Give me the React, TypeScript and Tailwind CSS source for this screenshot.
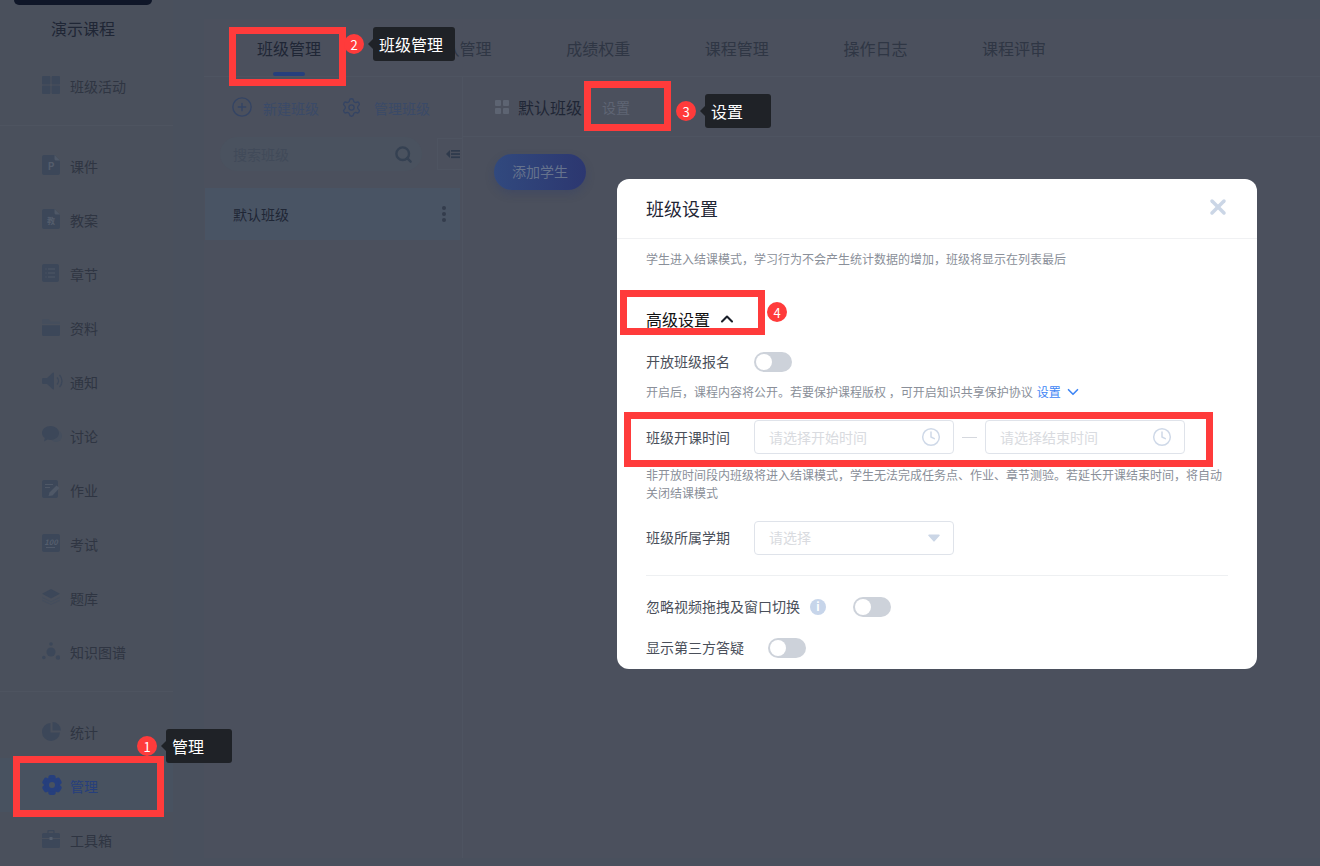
import { Search, CirclePlus, Settings, ChevronUp, ChevronDown, X, Clock } from 'lucide-react';
import type { ReactNode } from 'react';

const ICON = '#3c4759';

function DocIcon({ label }: { label: string }) {
  return (
    <svg width="18" height="20" viewBox="0 0 18 20">
      <path d="M2 0h10.500L18 5.500V18a2 2 0 0 1-2 2H2a2 2 0 0 1-2-2V2a2 2 0 0 1 2-2z" fill={ICON} />
      <path d="M12.500 0 18 5.500h-4a1.500 1.500 0 0 1-1.500-1.500z" fill="#4f5867" />
      <text x="9" y="15" textAnchor="middle" fontSize={label === 'P' ? 10 : 8} fontWeight="700" fill="#545d6c">{label}</text>
    </svg>
  );
}

const navIcons: Record<string, ReactNode> = {
  grid: (
    <svg width="18" height="18" viewBox="0 0 18 18" fill={ICON}>
      <rect width="8.400" height="8.400" rx="1" />
      <rect x="9.600" width="8.400" height="8.400" rx="1" />
      <rect y="9.600" width="8.400" height="8.400" rx="1" />
      <rect x="9.600" y="9.600" width="8.400" height="8.400" rx="1" />
    </svg>
  ),
  ppt: <DocIcon label="P" />,
  plan: <DocIcon label="教" />,
  list: (
    <svg width="18" height="18" viewBox="0 0 18 18">
      <rect width="17" height="18" rx="2" fill={ICON} />
      <path d="M6 5h7M6 9h7M6 13h7M3.500 5h1M3.500 9h1M3.500 13h1" stroke="#4f5867" strokeWidth="1.200" />
    </svg>
  ),
  folder: (
    <svg width="18" height="17" viewBox="0 0 18 17">
      <path d="M1.500 0h5l2 2.500h8A1.500 1.500 0 0 1 18 4v1H0V1.500A1.500 1.500 0 0 1 1.500 0z" fill="#454e5d" />
      <path d="M0 6.200h18v9.300a1.500 1.500 0 0 1-1.500 1.500h-15A1.500 1.500 0 0 1 0 15.500z" fill={ICON} />
    </svg>
  ),
  sound: (
    <svg width="22" height="18" viewBox="0 0 22 18" fill="none">
      <path d="M0 6.500 1.500 6H5l6-5.500a.8.800 0 0 1 1 .5v16a.8.800 0 0 1-1 .5L5 12H1.500L0 11.500z" fill={ICON} />
      <path d="M15 5.500a5 5 0 0 1 0 7M17.500 3a8.500 8.500 0 0 1 0 12" stroke={ICON} strokeWidth="1.400" />
    </svg>
  ),
  chat: (
    <svg width="20" height="18" viewBox="0 0 20 18">
      <ellipse cx="14" cy="10" rx="6" ry="6" fill="#454e5d" />
      <path d="M8.500 0C13 0 17 3 17 7s-4 7-8.500 7c-1 0-2-.1-3-.4L2 15.500l.8-3.500C1 10.800 0 9 0 7c0-4 4-7 8.500-7z" fill={ICON} />
    </svg>
  ),
  edit: (
    <svg width="18" height="18" viewBox="0 0 18 18">
      <rect width="16" height="18" rx="2" fill={ICON} />
      <path d="M3 4.500h8M3 7.500h5" stroke="#4f5867" strokeWidth="1.200" />
      <path d="M6.500 16l1-3.500L14.500 5.500l3 2.500-7 7.500z" fill="#4f5867" />
    </svg>
  ),
  exam: (
    <svg width="18" height="18" viewBox="0 0 18 18">
      <rect width="18" height="18" rx="2" fill={ICON} />
      <text x="9" y="11" textAnchor="middle" fontSize="7.500" fontStyle="italic" fontWeight="700" fill="#555e6d">100</text>
      <path d="M4 13.500h9" stroke="#555e6d" strokeWidth=".8" />
    </svg>
  ),
  stack: (
    <svg width="18" height="16" viewBox="0 0 18 16">
      <path d="M9 0l9 4.800-9 4.700L0 4.800z" fill={ICON} />
      <path d="M0 7.500l9 4.700 9-4.700v1.400l-9 4.600-9-4.600z" fill="#454e5d" />
      <path d="M0 10.500l9 4.200 9-4.200V12l-9 4-9-4z" fill="#454e5d" />
    </svg>
  ),
  graph: (
    <svg width="18" height="18" viewBox="0 0 18 18" fill={ICON}>
      <circle cx="9" cy="10" r="4.500" />
      <circle cx="9" cy="2" r="1.800" />
      <circle cx="1.800" cy="15.500" r="1.800" />
      <circle cx="16" cy="15.500" r="2.200" />
    </svg>
  ),
  pie: (
    <svg width="19" height="19" viewBox="0 0 19 19">
      <path d="M8.500 1v9.500H18A9 9 0 1 1 8.500 1z" fill={ICON} />
      <path d="M10.500 0A8.500 8.500 0 0 1 19 8.500h-8.500z" fill={ICON} />
    </svg>
  ),
  gear: (
    <svg width="20" height="20" viewBox="0 0 20 20" fill="#263f7d">
      <rect x="6.300" y="0" width="7.400" height="20" rx="2.500" />
      <rect x="6.300" y="0" width="7.400" height="20" rx="2.500" transform="rotate(60 10 10)" />
      <rect x="6.300" y="0" width="7.400" height="20" rx="2.500" transform="rotate(120 10 10)" />
      <circle cx="10" cy="10" r="7" />
      <circle cx="10" cy="10" r="3" fill="#485260" />
    </svg>
  ),
  box: (
    <svg width="18" height="18" viewBox="0 0 18 18">
      <path d="M6 3V1.500A1 1 0 0 1 7 .500h4a1 1 0 0 1 1 1V3" fill="none" stroke={ICON} strokeWidth="1.300" />
      <path d="M1.500 3h15A1.500 1.500 0 0 1 18 4.500V8H0V4.500A1.500 1.500 0 0 1 1.500 3z" fill={ICON} />
      <path d="M0 9h18v7.500a1.500 1.500 0 0 1-1.500 1.500h-15A1.500 1.500 0 0 1 0 16.500z" fill={ICON} />
      <rect x="7.500" y="7" width="3" height="3" fill="#555e6d" />
    </svg>
  ),
};

function NavItem({ icon, label, active }: { icon: string; label: string; active?: boolean }) {
  return (
    <div className={`flex h-[54px] items-center ${active ? 'bg-[#485260]' : ''}`}>
      <div className="ml-[42px] flex w-[28px] items-center">{navIcons[icon]}</div>
      <span className={`mt-[2px] text-sm leading-5 ${active ? 'text-[#263f7d]' : 'text-[#2f3542]'}`}>{label}</span>
    </div>
  );
}

function Sidebar() {
  const middle = [
    ['ppt', '课件'], ['plan', '教案'], ['list', '章节'], ['folder', '资料'], ['sound', '通知'],
    ['chat', '讨论'], ['edit', '作业'], ['exam', '考试'], ['stack', '题库'], ['graph', '知识图谱'],
  ];
  return (
    <aside className="flex h-full w-[173px] shrink-0 flex-col bg-[#4a505c]">
      <div className="mx-[14px] h-[7px] w-[138px] rounded-b-md bg-[#0f1628]" />
      <div className="mt-[13px] pr-[7px] text-center text-base leading-5 text-[#1f2635]">演示课程</div>
      <div className="mt-[20px] h-[54px]">
        <NavItem icon="grid" label="班级活动" />
      </div>
      <div className="mt-[13px] border-t border-[#4e5460]" />
      <div className="pt-[12px]">
        {middle.map(([icon, label]) => (
          <NavItem key={label} icon={icon} label={label} />
        ))}
      </div>
      <div className="mt-[13px] border-t border-[#4e5460]" />
      <div className="pt-[12px]">
        <NavItem icon="pie" label="统计" />
        <NavItem icon="gear" label="管理" active />
        <NavItem icon="box" label="工具箱" />
      </div>
    </aside>
  );
}

function Tabs() {
  const tabs = ['班级管理', '教师团队管理', '成绩权重', '课程管理', '操作日志', '课程评审'];
  return (
    <div className="flex h-[58px] shrink-0 items-center gap-[74.600px] border-b border-[#4e5461] pl-[53px]">
      {tabs.map((t, i) => (
        <div key={t} className={`relative flex h-full items-center text-base ${i === 0 ? 'text-[#1f2635]' : 'text-[#2f3644]'}`}>
          {t}
          {i === 0 && <div className="absolute bottom-[0px] left-1/2 h-[4px] w-[32px] -translate-x-1/2 rounded-full bg-[#263f7d]" />}
        </div>
      ))}
    </div>
  );
}

function ClassList() {
  return (
    <div className="w-[259px] shrink-0 border-r border-[#4e5461]">
      <div className="flex h-[60px] items-center pl-[27px] text-sm">
        <CirclePlus size={22} strokeWidth={1.500} className="text-[#344464]" />
        <span className="mt-[2px] ml-[10px] text-[#3a4a68]">新建班级</span>
        <Settings size={21} strokeWidth={1.500} className="ml-[22px] text-[#344464]" />
        <span className="mt-[2px] ml-[12px] text-[#3a4a68]">管理班级</span>
      </div>
      <div className="flex items-center">
        <div className="ml-[16px] flex h-[34px] w-[204px] items-center rounded-full bg-[#4a525f] pl-[13px] text-sm text-[#414a59]">
          搜索班级
          <Search size={19} strokeWidth={3} className="ml-[105px] text-[#354152]" />
        </div>
        <div className="ml-[15px] flex h-[32px] w-[25px] items-center justify-end border border-r-0 border-[#4e5461] pr-[2px]">
          <svg width="14" height="10" viewBox="0 0 14 10" fill="#2f3a4c">
            <path d="M0 5l4-4v8z" />
            <rect x="5" y="1" width="9" height="1.700" />
            <rect x="5" y="4.200" width="9" height="1.700" />
            <rect x="5" y="7.400" width="9" height="1.700" />
          </svg>
        </div>
      </div>
      <div className="mt-[17px] mr-[2px] ml-[1px] flex h-[52px] items-center justify-between bg-[#495464] pr-[13px] pl-[28px] text-sm text-[#1f2635]">
        默认班级
        <svg width="6" height="16" viewBox="0 0 6 16" fill="#333c4c">
          <circle cx="3" cy="2" r="2" />
          <circle cx="3" cy="8" r="2" />
          <circle cx="3" cy="14" r="2" />
        </svg>
      </div>
    </div>
  );
}

function ClassDetail() {
  return (
    <div className="flex-1">
      <div className="flex h-[60px] items-center border-b border-[#4e5461] pl-[32px]">
        <svg width="14" height="14" viewBox="0 0 14 14" fill="#5d6472">
          <rect width="6" height="6" rx="1" />
          <rect x="8" width="6" height="6" rx="1" />
          <rect y="8" width="6" height="6" rx="1" />
          <rect x="8" y="8" width="6" height="6" rx="1" />
        </svg>
        <span className="ml-[9px] text-base text-[#1f2635]">默认班级</span>
        <span className="ml-[20px] text-sm text-[#5f6574]">设置</span>
      </div>
      <button className="mt-[17px] ml-[31px] h-[36px] w-[92px] rounded-full bg-gradient-to-r from-[#31497e] to-[#2c3770] pb-[2px] text-sm text-[#66738d] shadow-[0_4px_8px_rgba(40,55,110,0.25)]">
        添加学生
      </button>
    </div>
  );
}

function Toggle() {
  return (
    <div className="flex h-[20px] w-[38px] shrink-0 items-center rounded-full bg-[#cdd2da] px-[2px]">
      <div className="h-[16px] w-[16px] rounded-full bg-white" />
    </div>
  );
}

function Field({ placeholder, icon, up }: { placeholder: string; icon: ReactNode; up?: boolean }) {
  return (
    <div className="flex h-[34px] w-[200px] items-center justify-between rounded border border-[#dfe3ea] pr-[13px] pl-[14px] text-sm text-[#d9dbe0]">
      <span className={up ? '-mt-[2px]' : ''}>{placeholder}</span>
      {icon}
    </div>
  );
}

function SettingsModal() {
  const clock = <Clock size={20} strokeWidth={1.800} className="-mr-[1px] text-[#cfd9e8]" />;
  return (
    <div className="absolute top-[179px] left-[617px] h-[490px] w-[640px] overflow-hidden rounded-xl bg-white">
      <div className="flex h-[60px] items-center justify-between border-b border-[#f0f1f3] pr-[27px] pl-[29px]">
        <span className="text-[18px] text-[#1f2635]">班级设置</span>
        <X size={24} strokeWidth={3.500} className="-mt-[4px] text-[#cbd6e6]" />
      </div>
      <div className="px-[29px]">
        <p className="mt-[11px] text-xs leading-[18px] text-[#8a8f99]">学生进入结课模式，学习行为不会产生统计数据的增加，班级将显示在列表最后</p>
        <div className="mt-[41px] flex h-[20px] items-center text-base text-[#111]">
          高级设置
          <ChevronUp size={20} strokeWidth={2.500} className="ml-[7px] text-[#1a1f29]" />
        </div>
        <div className="mt-[23px] flex h-[20px] items-center text-sm text-[#4a4f5a]">
          <span className="-mt-[2px] w-[108px]">开放班级报名</span>
          <Toggle />
        </div>
        <p className="mt-[11px] flex h-[18px] items-center text-xs text-[#8a8f99]">
          开启后，课程内容将公开。若要保护课程版权 ，可开启知识共享保护协议
          <span className="ml-[4px] text-[#3f86f5]">设置</span>
          <ChevronDown size={18} strokeWidth={2.200} className="ml-[3px] text-[#3f86f5]" />
        </p>
        <div className="mt-[19px] flex items-center text-sm text-[#4a4f5a]">
          <span className="w-[108px]">班级开课时间</span>
          <Field placeholder="请选择开始时间" icon={clock} />
          <div className="mx-[8px] h-px w-[15px] bg-[#d5d8de]" />
          <Field placeholder="请选择结束时间" icon={clock} />
        </div>
        <p className="mt-[12px] text-xs leading-[18px] text-[#8a8f99]">非开放时间段内班级将进入结课模式，学生无法完成任务点、作业、章节测验。若延长开课结束时间，将自动关闭结课模式</p>
        <div className="mt-[19px] flex items-center text-sm text-[#4a4f5a]">
          <span className="-mt-[2px] w-[108px]">班级所属学期</span>
          <Field
            up
            placeholder="请选择"
            icon={
              <svg width="12" height="8" viewBox="0 0 12 8" fill="#cbd6e6">
                <path d="M1 .500h10a.8.800 0 0 1 .6 1.300L6.600 7.300a.8.800 0 0 1-1.200 0L.4 1.800A.8.800 0 0 1 1 .500z" />
              </svg>
            }
          />
        </div>
        <div className="mt-[20px] border-t border-[#eef0f2]" />
        <div className="mt-[21px] flex h-[20px] items-center text-sm text-[#4a4f5a]">
          <span className="-mt-[2px]">忽略视频拖拽及窗口切换</span>
          <div className="ml-[10px] flex h-[16px] w-[16px] items-center justify-center rounded-full bg-[#c7d5ea] text-[11px] font-bold text-white">i</div>
          <div className="ml-[26px] pl-[1px]"><Toggle /></div>
        </div>
        <div className="mt-[21px] flex h-[20px] items-center text-sm text-[#4a4f5a]">
          <span className="-mt-[2px]">显示第三方答疑</span>
          <div className="ml-[24px]"><Toggle /></div>
        </div>
      </div>
    </div>
  );
}

// red marker frames, numbered badges and tooltips drawn over the shot
function Frame({ className }: { className: string }) {
  return <div className={`absolute border-[7px] border-[#ff3b3b] ${className}`} />;
}

function Badge({ n, className }: { n: number; className: string }) {
  return (
    <div className={`absolute flex h-[20px] w-[20px] items-center justify-center rounded-full bg-[#ff3b3b] text-[13px] leading-none text-white ${className}`}>
      {n}
    </div>
  );
}

function Tip({ text, className }: { text: string; className: string }) {
  return (
    <div className={`absolute flex h-[34px] items-center rounded-[3px] bg-[#1f2227] pl-[6px] text-base text-white ${className}`}>
      <div className="absolute top-1/2 -left-[5px] h-0 w-0 -translate-y-1/2 border-y-[5px] border-r-[5px] border-y-transparent border-r-[#1f2227]" />
      {text}
    </div>
  );
}

export default function App() {
  return (
    <div className="relative flex h-[866px] w-[1320px] overflow-hidden bg-[#49505d] font-['Noto_Sans_CJK_SC','Noto_Sans',sans-serif]">
      <Sidebar />
      <main className="flex-1 pt-[19px] pb-[8px] pl-[31px]">
        <div className="flex h-full flex-col bg-[#4b505d]">
          <Tabs />
          <div className="flex flex-1">
            <ClassList />
            <ClassDetail />
          </div>
        </div>
      </main>

      <SettingsModal />

      <Frame className="top-[756px] left-[13px] h-[61px] w-[151px]" />
      <Badge n={1} className="top-[736px] left-[137px]" />
      <Tip text="管理" className="top-[729px] left-[166px] w-[66px]" />

      <Frame className="top-[27px] left-[229px] h-[59px] w-[117px]" />
      <Badge n={2} className="top-[34px] left-[344px]" />
      <Tip text="班级管理" className="top-[27px] left-[373px] w-[82px]" />

      <Frame className="top-[81px] left-[584px] h-[50px] w-[87px]" />
      <Badge n={3} className="top-[101px] left-[676px]" />
      <Tip text="设置" className="top-[94px] left-[705px] w-[66px]" />

      <Frame className="top-[290px] left-[620px] h-[45px] w-[145px]" />
      <Badge n={4} className="top-[302px] left-[767px]" />

      <Frame className="top-[412px] left-[624px] h-[55px] w-[589px]" />
    </div>
  );
}
